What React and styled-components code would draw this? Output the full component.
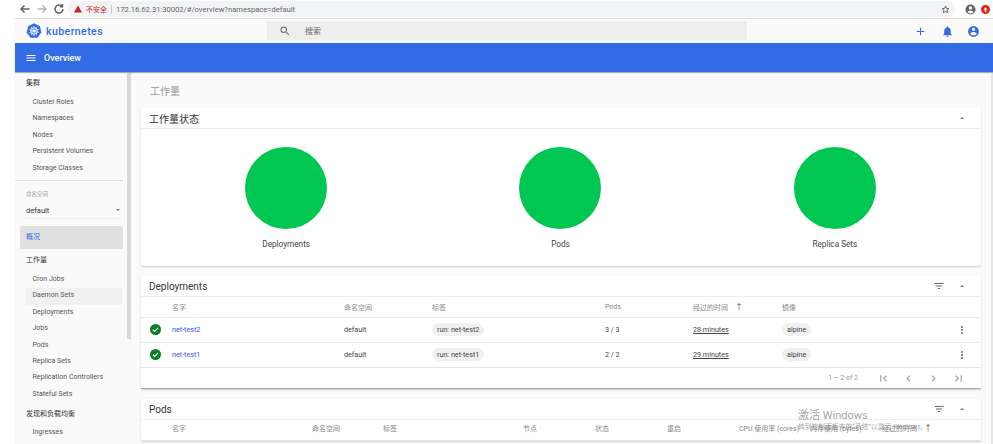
import React from 'react';
import styled, { createGlobalStyle } from 'styled-components';

const Global = createGlobalStyle`
  html, body { margin: 0; padding: 0; background: #fff; }
  body { width: 993px; height: 444px; overflow: hidden; font-family: Roboto, "Noto Sans CJK SC", sans-serif; color: #424242; }
  * { box-sizing: border-box; }
`;
const Page = styled.div`width: 993px; height: 444px; padding-left: 15px; display: flex; flex-direction: column; overflow: hidden; position: relative;`;
const Chrome = styled.div`height: 19px; flex: none; display: flex; align-items: center; background: #fff; border-bottom: 1px solid #dcdcdc; padding-left: 4px; gap: 5px;`;
const NavIcon = styled.svg`width: 12px; height: 12px; flex: none; fill: none; stroke: ${p => p.$c || '#5f6368'}; stroke-width: 1.5;`;
const Address = styled.div`margin: 0 5px 0 -2px; width: 887px; height: 16px; background: #f1f3f4; border-radius: 8px; display: flex; align-items: center; padding: 0 5px 0 6px; font-size: 7.6px; color: #666;`;
const Warn = styled.span`color: #c5221f; margin: 0 4px 0 4px; font-size: 7px; white-space: nowrap;`;
const Url = styled.span`flex: 1; padding-left: 4px; border-left: 1px solid #ccc; white-space: nowrap;`;
const Top = styled.div`height: 24px; flex: none; background: #fafafa; display: flex; align-items: center; padding-left: 11px;`;
const Brand = styled.div`width: 241px; display: flex; align-items: center; gap: 4px; color: #326ce5; font-size: 10.5px; font-weight: 500; letter-spacing: .45px;`;
const Search = styled.div`width: 480px; height: 19px; margin-top: -1px; background: #eee; display: flex; align-items: center; padding-left: 12px; gap: 14px; font-size: 8px; color: #666;`;
const TopIcons = styled.div`margin-left: auto; display: flex; align-items: center; gap: 13.5px; padding-right: 13px; color: #326ce5;`;
const BlueBar = styled.div`height: 29px; flex: none; background: #326ce5; color: #fff; display: flex; align-items: center; padding-left: 10px; gap: 7px; font-size: 9px; font-weight: 500; box-shadow: 0 1px 1px #aaa; z-index: 1;`;
const Body = styled.div`flex: 1; min-height: 0; display: flex; background: #fafafa;`;
const Side = styled.nav`width: 112px; flex: none; padding: 4px 0 0 11px; font-size: 7px; color: #555;`;
const Group = styled.div`font-size: 7px; height: 14px; line-height: 14px; color: #333; margin-top: ${p => p.$mt || 0}px; margin-bottom: ${p => p.$mb || 5}px;`;
const Item = styled.div`height: 16.4px; line-height: 15px; padding-left: 6.5px; width: 96px; background: ${p => p.$on ? '#f1f1f1' : 'transparent'}; white-space: nowrap;`;
const Rule = styled.div`height: 1px; background: #ddd; margin: 3px 0 0 -11px; width: 108px;`;
const NsLabel = styled.div`font-size: 5.5px; color: #999; margin-top: 9px;`;
const NsSel = styled.div`display: flex; justify-content: space-between; align-items: center; height: 16px; margin-top: 5px; width: 96px; border-bottom: 1px solid #eee; font-size: 7.5px; color: #333; padding-right: 2px;`;
const Caret = styled.i`width: 0; height: 0; border-left: 2.5px solid transparent; border-right: 2.5px solid transparent; border-${p => p.$up ? 'bottom' : 'top'}: 2.5px solid #777;`;
const Active = styled.div`height: 23px; line-height: 23px; margin: 7px 0 4px -6px; padding-left: 6px; width: 103px; background: #e0e0e0; border-radius: 2px; color: #326ce5; font-size: 7px;`;
const Track = styled.div`width: 4px; flex: none; background: #fafafa;`;
const Thumb = styled.div`width: 4px; height: 267px; background: #d8d8d8;`;
const Main = styled.main`flex: 1; min-width: 0; padding: 0 0 0 10px; overflow: hidden; position: relative;`;
const Title = styled.h1`margin: 0; height: 36px; padding: 11px 0 0 9px; font-size: 10px; font-weight: 400; color: #999;`;
const Card = styled.section`width: 840px; background: #fff; border-radius: 2px; box-shadow: 0 1px 2px rgba(0,0,0,.18); margin-bottom: 10px;`;
const CardHead = styled.header`height: 21px; display: flex; align-items: center; padding: 0 0 0 8px; border-bottom: 1px solid #eee; font-size: 10px; color: #333;`;
const HeadActions = styled.div`margin-left: auto; display: flex; align-items: center; gap: 15px; padding-right: 17px;`;
const Charts = styled.div`height: 137px; display: grid; grid-template-columns: repeat(3, 1fr); padding: 18px 9px 0 8px;`;
const Chart = styled.div`display: flex; flex-direction: column; align-items: center; font-size: 8.2px; color: #444; gap: 10px;`;
const Circle = styled.div`width: 82px; height: 82px; border-radius: 50%; background: #00c752;`;
const Row = styled.div`height: ${p => p.$h || 25}px; display: grid; grid-template-columns: ${p => p.$cols}; align-items: center; border-bottom: 1px solid #e8e8e8; font-size: ${p => p.$hd ? '7px' : '7.2px'}; color: ${p => p.$hd ? '#888' : '#444'}; white-space: nowrap; padding-bottom: 1px;`;
const Cell = styled.div`display: flex; align-items: center; ${p => p.$status ? 'padding-left: 9px;' : ''}`;
const NameLink = styled.span`color: #3f51e5;`;
const Chip = styled.span`background: #f0f0f0; border-radius: 7px; height: 13px; line-height: 13px; padding: 0 5px; font-size: 7.2px;`;
const Ago = styled.span`text-decoration: underline;`;
const SortArrow = styled.span`margin-left: 7px; font-size: 8px; color: #555;`;
const Pager = styled.div`height: 21px; display: flex; align-items: center; justify-content: flex-end; padding-right: 16px; font-size: 7px; color: #999; gap: 12px; border-bottom: 1px solid #aaa;`;
const PagerText = styled.span`margin-right: 7px;`;
const Watermark = styled.div`position: absolute; left: 667px; top: 338px; font-size: 11px; color: rgba(110,110,110,.65); line-height: 1; pointer-events: none;`;
const WaterSub = styled.div`font-size: 6.8px; margin-top: 3px; white-space: nowrap;`;
const Edge = styled.div`width: 2px; flex: none; background: #e4e4e4;`;

const Ic = styled.svg`width: ${p => p.$s || 12}px; height: ${p => p.$s || 12}px; fill: currentColor; flex: none; display: block;`;
const Gray = styled.span`color: #666; display: flex;`;
const Faint = styled.span`color: #9a9a9a; display: flex;`;

const FilterIcon = () => <Gray><Ic $s={12} viewBox="0 0 24 24"><path d="M10 18h4v-2h-4v2zM3 6v2h18V6H3zm3 7h12v-2H6v2z" /></Ic></Gray>;
const Ok = () => <svg width="11" height="11" viewBox="0 0 24 24"><circle cx="12" cy="12" r="12" fill="#087f23" /><path d="M6.500 12.500l3.700 3.700 7.500-7.700" fill="none" stroke="#fff" strokeWidth="2.600" /></svg>;
const Dots = () => <Gray><Ic $s={12} viewBox="0 0 24 24"><path d="M12 8a2 2 0 100-4 2 2 0 000 4zm0 2a2 2 0 100 4 2 2 0 000-4zm0 6a2 2 0 100 4 2 2 0 000-4z" /></Ic></Gray>;
const Logo = () => (
  <svg width="16" height="16" viewBox="0 0 24 24">
    <path d="M12 .5l8.800 4.300 2.200 9.600-6 7.600H7l-6-7.600 2.200-9.600z" fill="#326ce5" />
    <circle cx="12" cy="12" r="5" fill="none" stroke="#fff" strokeWidth="1.400" />
    <path d="M12 4.500v15M4.800 9.500l14.400 5M19.200 9.500l-14.400 5M7.500 5.800l9 12.400M16.500 5.800l-9 12.400" stroke="#fff" strokeWidth="1" />
  </svg>
);
const depCols = '31px 172px 88px 173px 88px 89px 174px 25px';
const podCols = '31px 140px 71px 140px 72px 72px 72px 71px 72px 1fr';

export default function App() {
  return (
    <Page>
      <Global />
      <Chrome>
        <NavIcon viewBox="0 0 12 12"><path d="M10.500 6H2M5.500 2.500L2 6l3.500 3.500" /></NavIcon>
        <NavIcon $c="#b8b8b8" viewBox="0 0 12 12"><path d="M1.500 6H10M6.500 2.500L10 6l-3.500 3.500" /></NavIcon>
        <NavIcon viewBox="0 0 12 12"><path d="M10 6a4 4 0 11-1.200-2.800M9.500 1v2.700H6.800" /></NavIcon>
        <Address>
          <svg width="8" height="8" viewBox="0 0 10 10"><path d="M5 .5L10 9.500H0z" fill="#c5221f" /></svg>
          <Warn>不安全</Warn>
          <Url>172.16.62.31:30002/#/overview?namespace=default</Url>
          <svg width="9" height="9" viewBox="0 0 24 24"><path d="M12 3l2.700 6 6.300.700-4.700 4.300 1.300 6.500L12 17.200 6.400 20.500 7.700 14 3 9.700 9.300 9z" fill="none" stroke="#555" strokeWidth="2.400" /></svg>
        </Address>
        <svg width="11" height="11" viewBox="0 0 24 24"><path fill="#5f6368" d="M12 1a11 11 0 100 22 11 11 0 000-22zm0 4a3.700 3.700 0 110 7.400A3.700 3.700 0 0112 5zm0 15.500a8.600 8.600 0 01-6.700-3.200c1.500-2 4.300-2.800 6.700-2.800s5.200.8 6.700 2.800A8.600 8.600 0 0112 20.500z" /></svg>
        <svg width="9" height="9" viewBox="0 0 24 24"><circle cx="12" cy="12" r="12" fill="#d9281c" /><path d="M12 6l5 6h-3v6h-4v-6H7z" fill="#fff" /></svg>
      </Chrome>
      <Top>
        <Brand><Logo />kubernetes</Brand>
        <Search>
          <Gray><Ic $s={12} viewBox="0 0 24 24"><path d="M15.5 14h-.79l-.28-.27A6.471 6.471 0 0 0 16 9.5 6.5 6.5 0 1 0 9.5 16c1.610 0 3.090-.59 4.230-1.570l.27.28v.79l5 4.990L20.490 19l-4.990-5zm-6 0C7.010 14 5 11.990 5 9.500S7.010 5 9.500 5 14 7.010 14 9.500 11.990 14 9.500 14z" /></Ic></Gray>
          搜索
        </Search>
        <TopIcons>
          <Ic $s={13} viewBox="0 0 24 24"><path d="M19 13h-6v6h-2v-6H5v-2h6V5h2v6h6z" /></Ic>
          <Ic $s={13} viewBox="0 0 24 24"><path d="M12 22a2 2 0 002-2h-4a2 2 0 002 2zm6-6v-5c0-3.100-1.600-5.600-4.500-6.300V4a1.500 1.500 0 00-3 0v.7C7.600 5.400 6 7.900 6 11v5l-2 2v1h16v-1z" /></Ic>
          <Ic $s={13} viewBox="0 0 24 24"><path d="M12 2a10 10 0 100 20 10 10 0 000-20zm0 3a3 3 0 110 6 3 3 0 010-6zm0 14.200a7.200 7.200 0 01-6-3.200c0-2 4-3.100 6-3.100s6 1.100 6 3.100a7.200 7.200 0 01-6 3.200z" /></Ic>
        </TopIcons>
      </Top>
      <BlueBar>
        <Ic $s={12} viewBox="0 0 24 24"><path d="M3 18h18v-2H3v2zm0-5h18v-2H3v2zm0-7v2h18V6H3z" /></Ic>
        Overview
      </BlueBar>
      <Body>
        <Side>
          <Group>集群</Group>
          {['Cluster Roles', 'Namespaces', 'Nodes', 'Persistent Volumes', 'Storage Classes'].map(t => <Item key={t}>{t}</Item>)}
          <Rule />
          <NsLabel>命名空间</NsLabel>
          <NsSel>default<Caret /></NsSel>
          <Active>概况</Active>
          <Group>工作量</Group>
          {['Cron Jobs', 'Daemon Sets', 'Deployments', 'Jobs', 'Pods', 'Replica Sets', 'Replication Controllers', 'Stateful Sets'].map(t => <Item key={t} $on={t === 'Daemon Sets'}>{t}</Item>)}
          <Group $mt={4} $mb={4}>发现和负载均衡</Group>
          <Item>Ingresses</Item>
        </Side>
        <Track><Thumb /></Track>
        <Main>
          <Title>工作量</Title>
          <Card>
            <CardHead>工作量状态<HeadActions><Caret $up /></HeadActions></CardHead>
            <Charts>
              <Chart><Circle />Deployments</Chart>
              <Chart><Circle />Pods</Chart>
              <Chart><Circle />Replica Sets</Chart>
            </Charts>
          </Card>
          <Card>
            <CardHead>Deployments<HeadActions><FilterIcon /><Caret $up /></HeadActions></CardHead>
            <Row $hd $h={21} $cols={depCols}><Cell /><Cell>名字</Cell><Cell>命名空间</Cell><Cell>标签</Cell><Cell>Pods</Cell><Cell>经过的时间<SortArrow>↑</SortArrow></Cell><Cell>镜像</Cell><Cell /></Row>
            <Row $cols={depCols}><Cell $status><Ok /></Cell><Cell><NameLink>net-test2</NameLink></Cell><Cell>default</Cell><Cell><Chip>run: net-test2</Chip></Cell><Cell>3 / 3</Cell><Cell><Ago>28 minutes</Ago></Cell><Cell><Chip>alpine</Chip></Cell><Cell><Dots /></Cell></Row>
            <Row $cols={depCols}><Cell $status><Ok /></Cell><Cell><NameLink>net-test1</NameLink></Cell><Cell>default</Cell><Cell><Chip>run: net-test1</Chip></Cell><Cell>2 / 2</Cell><Cell><Ago>29 minutes</Ago></Cell><Cell><Chip>alpine</Chip></Cell><Cell><Dots /></Cell></Row>
            <Pager>
              <PagerText>1 – 2 of 2</PagerText>
              <Faint><Ic $s={13} viewBox="0 0 24 24"><path d="M18.400 16.600L13.800 12l4.600-4.600L17 6l-6 6 6 6zM6 6h2v12H6z" /></Ic></Faint>
              <Faint><Ic $s={13} viewBox="0 0 24 24"><path d="M15.400 7.400L14 6l-6 6 6 6 1.400-1.400-4.600-4.600z" /></Ic></Faint>
              <Faint><Ic $s={13} viewBox="0 0 24 24"><path d="M10 6L8.600 7.400l4.600 4.600-4.600 4.600L10 18l6-6z" /></Ic></Faint>
              <Faint><Ic $s={13} viewBox="0 0 24 24"><path d="M5.600 7.400L10.200 12l-4.600 4.600L7 18l6-6-6-6zM16 6h2v12h-2z" /></Ic></Faint>
            </Pager>
          </Card>
          <Card>
            <CardHead>Pods<HeadActions><FilterIcon /><Caret $up /></HeadActions></CardHead>
            <Row $hd $h={21} $cols={podCols}><Cell /><Cell>名字</Cell><Cell>命名空间</Cell><Cell>标签</Cell><Cell>节点</Cell><Cell>状态</Cell><Cell>重启</Cell><Cell>CPU 使用率 (cores)</Cell><Cell>内存使用 (bytes)</Cell><Cell>经过的时间<SortArrow>↑</SortArrow></Cell><Cell /></Row>
          </Card>
          <Watermark>激活 Windows<WaterSub>转到控制面板中的“系统”以激活 Windows。</WaterSub></Watermark>
        </Main>
        <Edge />
      </Body>
    </Page>
  );
}
